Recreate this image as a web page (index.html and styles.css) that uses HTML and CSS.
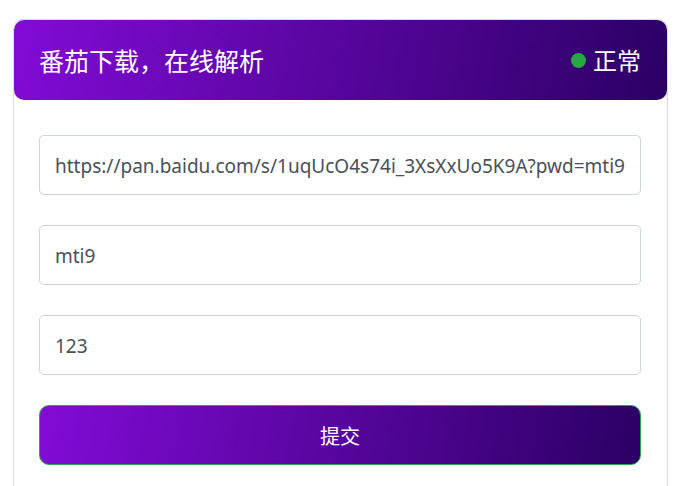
FILE: index.html
```html
<!DOCTYPE html>
<html lang="zh-CN">
<head>
<meta charset="utf-8">
<title>番茄下载，在线解析</title>
<link rel="stylesheet" href="styles.css">
</head>
<body>
<div class="page">
  <div class="card">
    <div class="card-header">
      <h1 class="title">番茄下载，在线解析</h1>
      <div class="status"><span class="dot"></span><span class="status-text">正常</span></div>
    </div>
    <form class="card-body">
      <input class="field" type="text" value="https://pan.baidu.com/s/1uqUcO4s74i_3XsXxUo5K9A?pwd=mti9">
      <input class="field" type="text" value="mti9">
      <input class="field" type="text" value="123">
      <button class="submit" type="button">提交</button>
    </form>
  </div>
</div>
</body>
</html>
```
FILE: styles.css
```css
html, body {
  margin: 0;
  padding: 0;
  background: #fff;
  font-family: "Noto Sans", "Noto Sans CJK SC", sans-serif;
  overflow: hidden;
}
.page {
  padding: 19px 20px 0 13px;
}
.card {
  border: 1px solid #dcdcdc;
  border-bottom: none;
  border-radius: 10px 10px 0 0;
  height: calc(100vh - 19px);
  box-sizing: border-box;
}
.card-header {
  height: 80px;
  border-radius: 10px;
  background: linear-gradient(100deg, #820bd6 0%, #2b0064 100%);
  display: flex;
  align-items: center;
  justify-content: space-between;
  padding: 0 26px 0 25px;
  color: #fff;
}
.title {
  margin: 0;
  font-family: "Noto Sans CJK SC", sans-serif;
  font-size: 25px;
  font-weight: 400;
  line-height: 1;
}
.status {
  display: flex;
  align-items: center;
  gap: 7px;
}
.dot {
  width: 15px;
  height: 15px;
  border-radius: 50%;
  background: #28a745;
}
.status-text {
  font-family: "Noto Sans CJK SC", sans-serif;
  font-size: 24px;
  line-height: 1;
}
.card-body {
  margin: 0;
  padding: 35px 26px 0 25px;
  display: flex;
  flex-direction: column;
  gap: 30px;
}
.field {
  height: 60px;
  box-sizing: border-box;
  border: 1px solid #ced4da;
  border-radius: 5px;
  padding: 2px 15px 0;
  font-family: "Noto Sans", sans-serif;
  font-size: 19px;
  color: #495057;
  background: #fff;
  outline: none;
}
.submit {
  height: 60px;
  border: 1px solid #28a745;
  border-radius: 10px;
  background: linear-gradient(100deg, #820bd6 0%, #2b0064 100%);
  color: #fff;
  font-family: "Noto Sans CJK SC", sans-serif;
  font-size: 20px;
}
```
